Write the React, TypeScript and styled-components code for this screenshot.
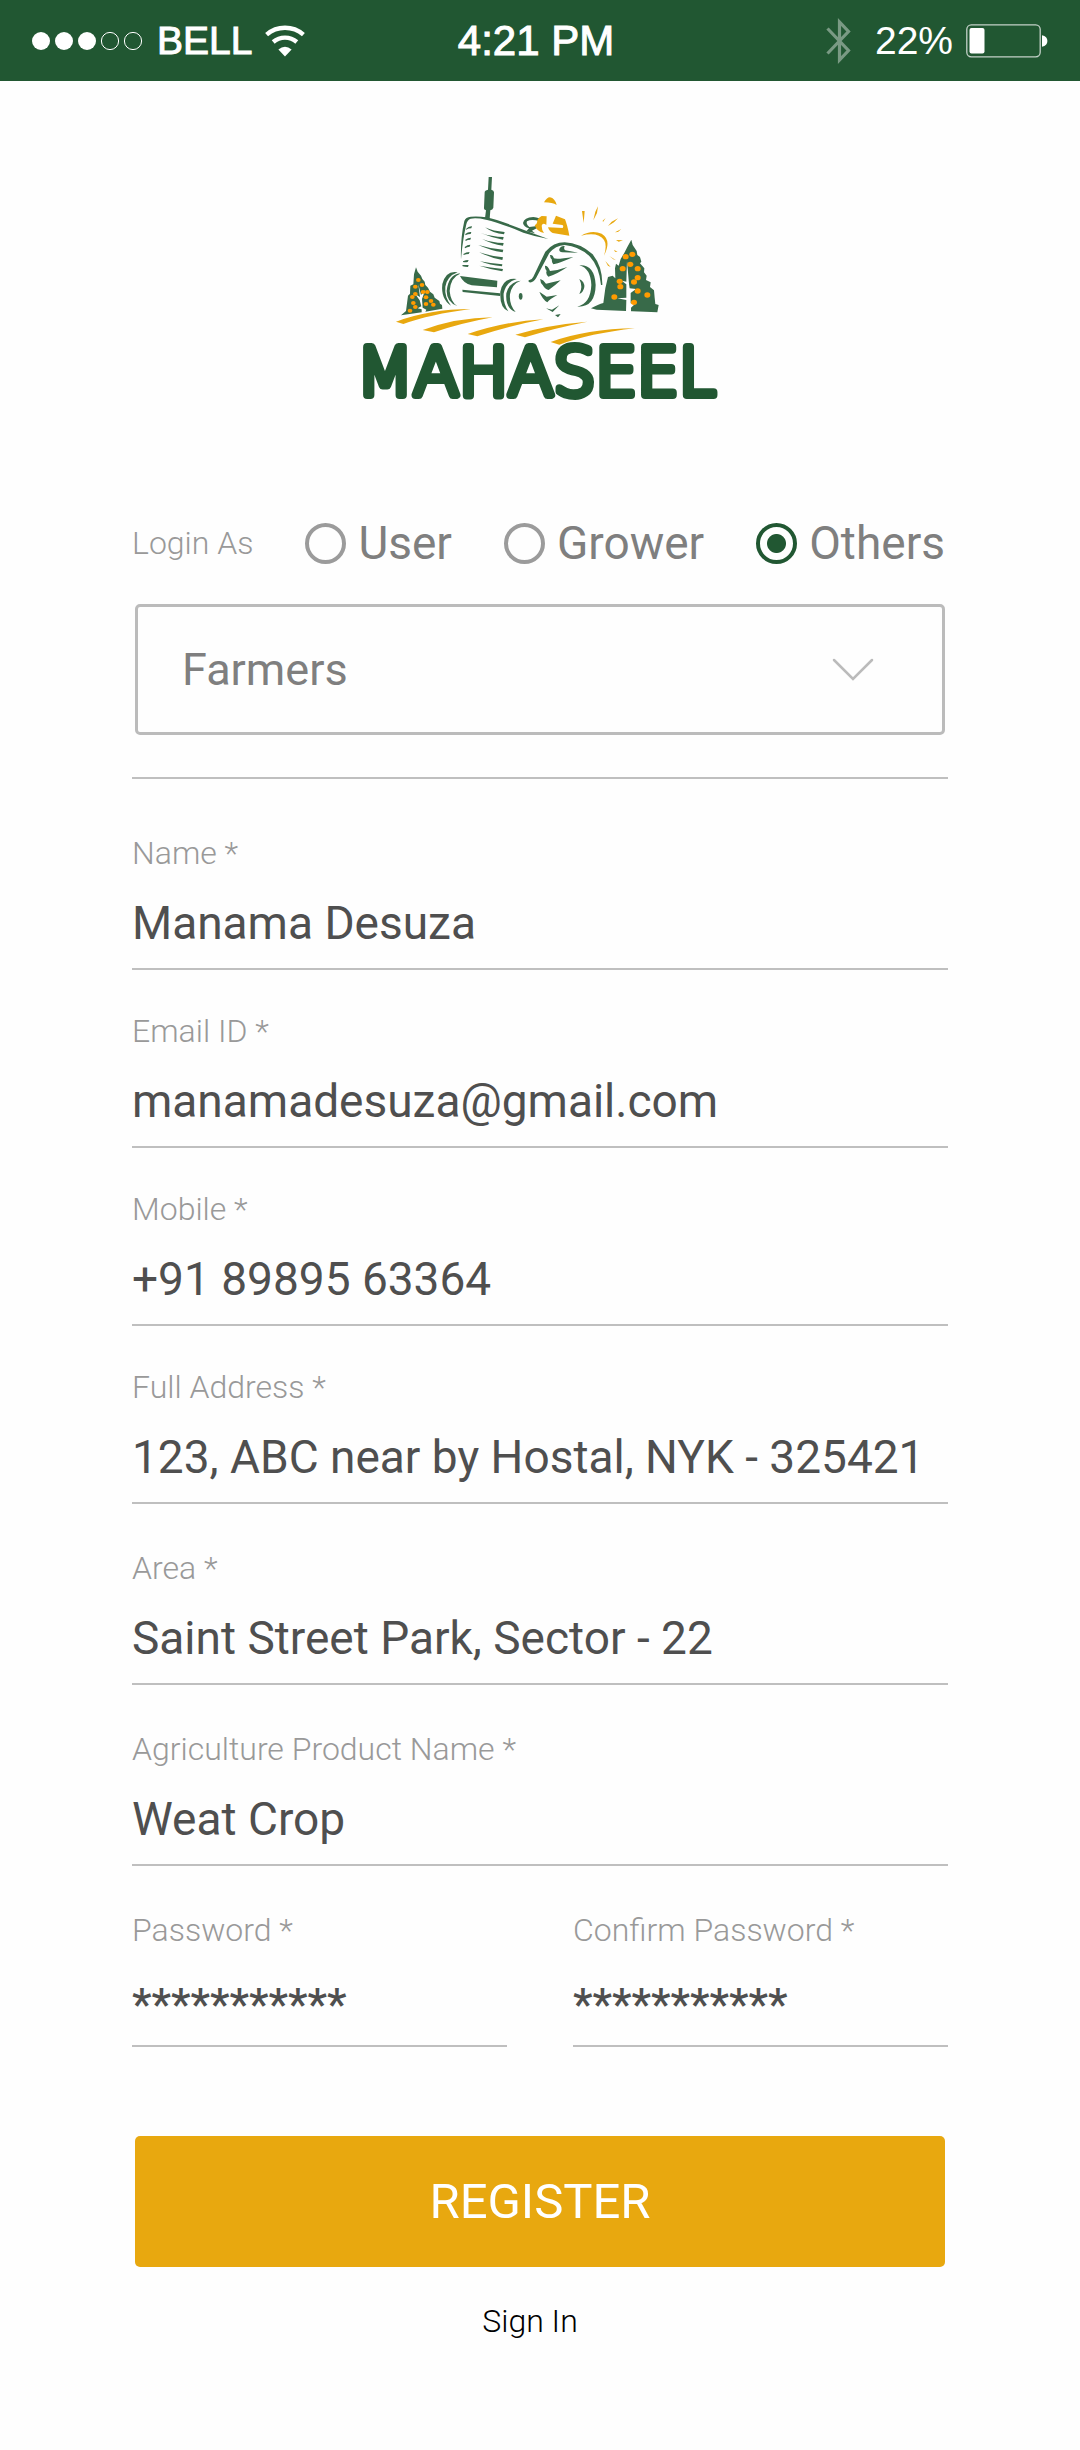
import React from 'react';
import styled, { createGlobalStyle } from 'styled-components';

const Global = createGlobalStyle`
  *, *::before, *::after { box-sizing: border-box; }
  body { margin: 0; background: #fefefe; font-family: Roboto, "Liberation Sans", sans-serif; }
`;

const green = '#215732';
const leaf = '#386a49';
const gold = '#e8a80f';
const paper = '#fefefe';

const StatusBar = styled.header`
  display: grid;
  grid-template-columns: 1fr auto 1fr;
  align-items: center;
  height: 81px;
  padding: 0 32px;
  background: ${green};
  color: #fff;
  font-family: "Liberation Sans", Arial, sans-serif;
`;
const StatusGroup = styled.div<{ $end?: boolean }>`
  display: flex;
  align-items: center;
  justify-content: ${p => (p.$end ? 'flex-end' : 'flex-start')};
  gap: 13px;
`;
const StatusText = styled.span<{ $size: number; $heavy?: boolean }>`
  font-size: ${p => p.$size}px;
  line-height: 48px;
  -webkit-text-stroke: ${p => (p.$heavy ? '1px #fff' : '0')};
`;
const Clock = styled(StatusText)`
  padding-right: 8px;
`;
const BluetoothIcon = styled.svg`
  width: 26px;
  height: 46px;
  margin-right: 10px;
`;
const Main = styled.main`
  display: flex;
  flex-direction: column;
  padding: 96px 132px 110px;
`;
const Logo = styled.svg`
  width: 400px;
  height: 250px;
  align-self: center;
`;
const Form = styled.form`
  display: flex;
  flex-direction: column;
  margin-top: 88px;
`;
const RoleRow = styled.fieldset`
  display: flex;
  align-items: center;
  justify-content: space-between;
  margin: 0;
  padding: 0 3px 0 0;
  border: 0;
  height: 58px;
`;
const Caption = styled.span`
  font-size: 32px;
  line-height: 38px;
  font-weight: 300;
  color: #999;
`;
const RoleLabel = styled.label`
  display: flex;
  align-items: center;
  gap: 12px;
  font-size: 46px;
  line-height: 56px;
  color: #7f7f7f;
`;
const Radio = styled.input`
  appearance: none;
  width: 41px;
  height: 41px;
  margin: 0;
  border: 4px solid #9b9b9b;
  border-radius: 50%;
  &:checked {
    border-color: ${green};
    background: radial-gradient(circle, ${green} 9px, transparent 10px);
  }
`;
const SelectBox = styled.div`
  display: grid;
  align-items: center;
  margin: 31px 3px 0;
  > * { grid-area: 1 / 1; }
`;
const Select = styled.select`
  appearance: none;
  width: 100%;
  height: 131px;
  padding: 0 44px;
  border: 3px solid #bbb;
  border-radius: 5px;
  background: transparent;
  font-family: inherit;
  font-size: 45px;
  color: #7f7f7f;
`;
const Chevron = styled.svg`
  width: 42px;
  height: 24px;
  justify-self: end;
  margin-right: 71px;
  pointer-events: none;
`;
const Divider = styled.hr`
  width: 100%;
  height: 2px;
  margin: 42px 0 55px;
  border: 0;
  background: #bfbfbf;
`;
const Fields = styled.div<{ $gap: number }>`
  display: flex;
  flex-direction: column;
  gap: ${p => p.$gap}px;
  & + & { margin-top: 45px; }
`;
const Field = styled.div`
  display: flex;
  flex-direction: column;
  min-width: 0;
`;
const FieldLabel = styled(Caption).attrs({ as: 'label' })<{ htmlFor?: string }>``;
const Input = styled.input<{ $masked?: boolean }>`
  width: 100%;
  height: 98px;
  padding: ${p => (p.$masked ? 16 : 6)}px 0 0;
  border: 0;
  border-bottom: 2px solid #bfbfbf;
  border-radius: 0;
  background: transparent;
  outline: 0;
  font-family: inherit;
  font-size: ${p => (p.$masked ? 44 : 46)}px;
  font-weight: ${p => (p.$masked ? 500 : 400)};
  color: #4f4f4f;
`;
const PasswordRow = styled.div`
  display: grid;
  grid-template-columns: 1fr 1fr;
  gap: 66px;
`;
const Register = styled.button`
  height: 131px;
  margin: 89px 3px 0;
  border: 0;
  border-radius: 5px;
  background: ${gold};
  color: #fff;
  font-family: inherit;
  font-size: 49px;
`;
const SignIn = styled.a`
  align-self: center;
  margin: 35px 20px 0 0;
  font-size: 32px;
  line-height: 38px;
  font-weight: 300;
  color: #000;
  text-decoration: none;
`;

const Signal = () => (
  <svg width="112" height="20" viewBox="0 0 112 20" aria-hidden="true">
    {[0, 1, 2, 3, 4].map(i => (
      <circle key={i} cx={9 + i * 23} cy="10" r={i < 3 ? 9 : 8.6} fill={i < 3 ? '#fff' : 'none'} stroke="#fff" strokeWidth={i < 3 ? 0 : 1} />
    ))}
  </svg>
);
const Wifi = () => (
  <svg width="40" height="32" viewBox="0 0 40 32" aria-hidden="true">
    <g fill="none" stroke="#fff" strokeWidth="4.4">
      <path d="M1.6 9.6A28 28 0 0 1 38.4 9.6" />
      <path d="M8.2 17A18 18 0 0 1 31.8 17" />
    </g>
    <path d="M13.4 24.6Q20 18.8 26.6 24.6L20 31.4Z" fill="#fff" />
  </svg>
);
const Bluetooth = () => (
  <BluetoothIcon viewBox="0 0 26 46" aria-hidden="true">
    <path d="M1.500 10.500L22.500 32.500 13.500 42V4L22.500 13.500 1.500 35.500" fill="none" stroke="#7a9a84" strokeWidth="3.200" />
  </BluetoothIcon>
);
const Battery = () => (
  <svg width="82" height="34" viewBox="0 0 82 34" aria-hidden="true">
    <rect x="0.8" y="0.8" width="73.4" height="32" rx="4.5" fill="none" stroke="#c3d1c8" strokeWidth="1.3" />
    <rect x="3.5" y="4" width="15" height="25.5" rx="2" fill="#fff" />
    <path d="M76 11.300q5.400 1.200 5.400 5.700t-5.400 5.700z" fill="#fff" />
  </svg>
);

const leftFruit = [[205, 345], [216, 360], [196, 365], [219, 381], [232, 381], [196, 387], [187, 396], [228, 397], [243, 408], [190, 414], [228, 417], [250, 419], [196, 426], [180, 437]];
const rightFruit = [[307, 268], [287, 275], [301, 298], [278, 311], [323, 311], [323, 338], [269, 349], [312, 351], [271, 365], [323, 378], [352, 390], [253, 396], [312, 412]];

const MahaseelLogo = () => (
  <Logo viewBox="-20 0 400 250" role="img" aria-label="Mahaseel">
    <g transform="translate(-10 -12) scale(.33333)">
      <g fill={leaf}>
        {/* exhaust and bonnet */}
        <path d="M416 36h10l-2 38q8 2 8 8l-2 46q-2 6-9 8l-2 26-14-2 3-24q-7-2-6-8l2-46q0-6 10-8z" />
        <path d="M333 283Q331 220 343 168Q347 156 362 155Q385 153 410 157Q450 166 530 198L595 222Q560 216 520 203Q450 174 408 164Q380 158 362 161Q352 164 349 178Q338 225 333 283z" />
        {/* side vents */}
        <path d="M348 192q8-9 18-8l-2 6q-8 0-16 4zM346 207q8-7 18-6l-2 6q-8 0-16 4zM346 224q8-6 17-6l-2 6q-8 0-14 4zM344 246q8-7 17-7l-2 6q-8 0-14 5zM340 267q8-6 19-6l-3 6q-8 0-15 3zM339 289q8-4 17-4l-3 6q-8 1-14 0zM337 300l19 0-2 6q-10 0-16-2z" />
        {/* grille */}
        <path d="M405 187Q430 199 464 201L462 208Q430 206 405 187zM392 204Q425 215 461 216L459 224Q425 218 392 204zM397 222Q425 233 461 234L459 242Q425 238 397 222zM385 240Q420 251 460 254L458 262Q420 256 385 240zM388 262Q420 273 459 277L457 285Q420 278 388 262zM390 289Q420 295 457 298L456 304Q420 301 390 289zM388 302Q420 308 459 312L457 319Q420 313 388 302z" />
        {/* bumper and axle */}
        <path d="M330 333L442 347 441 367 365 361Q340 355 330 333zM337 374L450 385V393L338 381z" />
        {/* front wheels */}
        <path d="M323 322Q288 315 277 357Q272 402 303 422Q283 395 286 365Q292 333 323 322zM329 327Q302 337 299 378Q302 412 322 423Q290 412 290 378Q295 330 329 325z" />
        <path d="M500 342Q459 337 451 380Q448 428 475 439Q459 415 461 385Q468 350 500 342zM512 347Q478 350 469 385Q465 430 497 441Q477 420 480 388Q485 357 512 347z" />
        <ellipse cx="512" cy="394" rx="5.500" ry="10" />
        {/* steering wheel */}
        <path d="M519 174Q522 157 550 156Q570 158 577 166L569 169Q545 161 531 169Q527 177 538 186L556 184Q563 177 574 174L560 190 546 197 555 205 529 199 537 190Q521 186 519 174z" />
        {/* left tree */}
        <path d="M198 307L203 320 213 332 217 342 224 350 226 360 234 368 240 380 250 388 254 398 268 408 270 416 276 420 277 431 226 440 153 451 168 438 174 392 180 386 181 362 190 358 192 328z" />
      </g>
      <path d="M205 358L210 396 196 388 209 406 214 424 203 430 215 433V443H225L229 434 218 428 216 402 226 374 213 390z" fill={paper} />
      {/* furrows */}
      <path d="M138 470Q240 432 362 432Q240 448 160 477zM218 495Q320 458 428 457Q330 475 252 502zM353 507Q470 468 580 463Q480 482 382 514zM496 509Q590 480 712 470Q610 490 525 517zM602 531Q710 492 855 490Q720 505 628 539z" fill={gold} />
      <g fill="#ff9b00">
        {leftFruit.map(([x, y]) => <ellipse key={`${x}-${y}`} cx={x} cy={y} rx="7" ry="6" />)}
      </g>
    </g>
    <g transform="translate(170 -12) scale(.33333)">
      {/* farmer */}
      <path d="M42 112Q52 96 60 97Q75 100 80 120Q68 112 42 112zM35 153L50 154 49 180Q38 172 35 182Q35 195 42 204Q20 200 14 180Q22 178 22 165Q28 156 35 153zM78 152L105 163Q112 180 118 212L68 204Q58 200 54 187L98 189Q102 182 97 180L68 176z" fill={gold} />
      {/* sun */}
      <path d="M153 212Q185 193 215 206Q246 225 222 272Q232 240 222 225Q205 200 153 212zM156 138h8l-3 36zM204 124L201 144 190 166 196 140zM227 159L219 171 218 167zM264 160L252 172 234 183 245 170zM274 192L264 201 255 202zM258 225L279 226 266 230zM252 254L263 261 255 260zM238 273L258 286 250 283zM226 288L242 306 234 302z" fill={gold} />
      <g fill={leaf}>
        {/* rear mudguard */}
        <path d="M-4 345Q4 347 10 335L46 260Q70 232 104 232Q150 234 188 268Q218 306 217 360L213 360Q208 305 180 275Q148 244 104 240Q76 242 58 264L18 340Q8 356-4 351z" />
        {/* treads */}
        <path d="M88 252Q92 242 104 243Q100 252 106 256L145 263 97 262Q86 260 88 252zM60 270Q68 268 72 280Q80 284 130 276Q95 292 70 298Q64 290 66 284Q60 278 60 270zM45 302Q54 302 60 318Q85 316 112 306Q80 328 55 335Q46 326 50 318Q44 312 45 302zM31 342Q40 344 48 356L92 346Q75 362 56 375Q46 374 38 360Q30 352 31 342zM28 380L50 395 82 390Q60 402 52 412Q38 404 28 380zM48 430L66 434 88 421 68 441zM75 450L92 447 84 457z" />
        {/* rear hub */}
        <path d="M148 301Q194 298 197 360Q196 427 142 425Q182 415 184 360Q182 310 148 301zM148 342Q164 350 163 366Q160 382 148 387Q160 366 148 342z" />
        {/* right tree */}
        <path d="M304 224L308 240 320 258 322 270 330 276 334 290 330 295 343 310 342 322 350 332 348 345 362 352 360 366 372 376 374 398 376 417 386 420 382 442 288 438 200 434 183 430Q205 418 220 414L226 370 234 336 248 332 256 340 255 310 258 296 266 302 272 282 284 262 292 246z" />
      </g>
      <path d="M291 288L297 356 299 370 318 372 302 384 302 415 314 418 303 428V441H288L289 405 262 400 289 398 289 358 275 347 289 350z" fill={paper} />
      <g fill="#ff9b00">
        {rightFruit.map(([x, y]) => <ellipse key={`${x}-${y}`} cx={x} cy={y} rx="9" ry="8" />)}
      </g>
    </g>
    <text x="176" y="218" textAnchor="middle" fontFamily='"DejaVu Sans", sans-serif' fontWeight="200" fontSize="66" fill={green} stroke={green} strokeWidth="8" strokeLinejoin="round">MAHASEEL</text>
  </Logo>
);

type TextFieldProps = { id: string; label: string; value: string; type?: string; masked?: boolean };

const TextField = ({ id, label, value, type = 'text', masked }: TextFieldProps) => (
  <Field>
    <FieldLabel htmlFor={id}>{label} *</FieldLabel>
    <Input id={id} name={id} type={type} defaultValue={value} $masked={masked} />
  </Field>
);

export default function App() {
  return (
    <>
      <Global />
      <StatusBar>
        <StatusGroup>
          <Signal />
          <StatusText $size={39} $heavy>BELL</StatusText>
          <Wifi />
        </StatusGroup>
        <Clock $size={42} $heavy>4:21 PM</Clock>
        <StatusGroup $end>
          <Bluetooth />
          <StatusText $size={39}>22%</StatusText>
          <Battery />
        </StatusGroup>
      </StatusBar>
      <Main>
        <MahaseelLogo />
        <Form onSubmit={e => e.preventDefault()}>
          <RoleRow aria-label="Login As">
            <Caption>Login As</Caption>
            {['User', 'Grower', 'Others'].map(role => (
              <RoleLabel key={role}>
                <Radio type="radio" name="role" value={role} defaultChecked={role === 'Others'} />
                {role}
              </RoleLabel>
            ))}
          </RoleRow>
          <SelectBox>
            <Select aria-label="Account type" defaultValue="Farmers">
              <option>Farmers</option>
            </Select>
            <Chevron viewBox="0 0 42 24" aria-hidden="true">
              <path d="M2 2L21 21 40 2" fill="none" stroke="#bbb" strokeWidth="2.500" strokeLinecap="round" />
            </Chevron>
          </SelectBox>
          <Divider />
          <Fields $gap={42}>
            <TextField id="name" label="Name" value="Manama Desuza" />
            <TextField id="email" label="Email ID" value="manamadesuza@gmail.com" type="email" />
            <TextField id="mobile" label="Mobile" value="+91 89895 63364" type="tel" />
            <TextField id="address" label="Full Address" value="123, ABC near by Hostal, NYK - 325421" />
          </Fields>
          <Fields $gap={45}>
            <TextField id="area" label="Area" value="Saint Street Park, Sector - 22" />
            <TextField id="product" label="Agriculture Product Name" value="Weat Crop" />
            <PasswordRow>
              <TextField id="password" label="Password" value="***********" masked />
              <TextField id="confirm" label="Confirm Password" value="***********" masked />
            </PasswordRow>
          </Fields>
          <Register type="submit">REGISTER</Register>
          <SignIn href="#signin">Sign In</SignIn>
        </Form>
      </Main>
    </>
  );
}
